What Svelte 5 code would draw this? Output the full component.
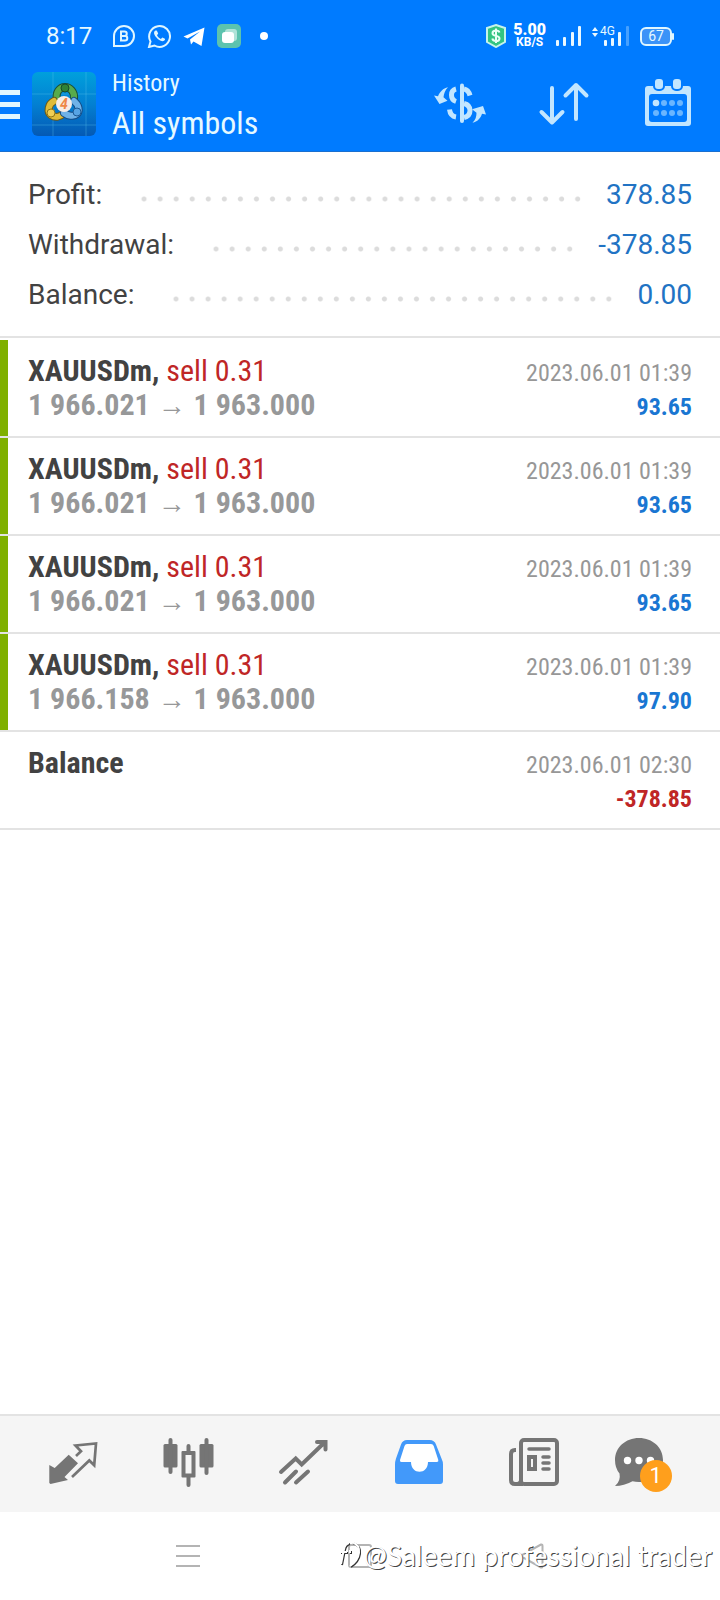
<script lang="ts">
	type Summary = { label: string; value: string };
	type Deal = {
		id: number;
		symbol: string;
		action?: string;
		open?: string;
		close?: string;
		time: string;
		profit: string;
	};

	const summary: Summary[] = [
		{ label: "Profit", value: "378.85" },
		{ label: "Withdrawal", value: "-378.85" },
		{ label: "Balance", value: "0.00" },
	];

	const deals: Deal[] = [
		{ id: 1, symbol: "XAUUSDm", action: "sell 0.31", open: "1 966.021", close: "1 963.000", time: "2023.06.01 01:39", profit: "93.65" },
		{ id: 2, symbol: "XAUUSDm", action: "sell 0.31", open: "1 966.021", close: "1 963.000", time: "2023.06.01 01:39", profit: "93.65" },
		{ id: 3, symbol: "XAUUSDm", action: "sell 0.31", open: "1 966.021", close: "1 963.000", time: "2023.06.01 01:39", profit: "93.65" },
		{ id: 4, symbol: "XAUUSDm", action: "sell 0.31", open: "1 966.158", close: "1 963.000", time: "2023.06.01 01:39", profit: "97.90" },
		{ id: 5, symbol: "Balance", time: "2023.06.01 02:30", profit: "-378.85" },
	];

	let tab = $state("history");
</script>

<div class="app">
	<header>
		<div class="status">
			<div class="status-left">
				<span class="clock">8:17</span>
				<svg width="24" height="24" viewBox="0 0 24 24" fill="none" stroke="#dff6ff" stroke-width="2">
					<path d="M2 22V12a10 10 0 1 1 10 10z" />
					<path d="M9 7.500h3.500a2.200 2.200 0 0 1 0 4.500H9zM9 12h4a2.300 2.300 0 0 1 0 4.600H9z" />
				</svg>
				<svg width="24" height="24" viewBox="0 0 24 24" fill="none" stroke="#dff6ff" stroke-width="2">
					<path d="M2 23l1.500-5.500A10.400 10.400 0 1 1 7.500 21.500z" />
					<path fill="#dff6ff" stroke="none" d="M8.500 6.500c-2 1-2 3.500.5 6.500s5.500 5 8 3.800c1-.6 1.200-1.600.9-2l-2.500-1.400-1.600 1.500c-1.600-.6-3-2-3.800-3.700l1.200-1.600-1.200-2.700c-.4-.6-1-.6-1.500-.4z" />
				</svg>
				<svg width="24" height="24" viewBox="0 0 24 24" fill="#fff">
					<path d="M1.500 12.500L22.500 3.500 19.500 22 11.500 17.500 9 20.500 8 15.500 18 7.500 5.500 14.500z" />
				</svg>
				<svg width="24" height="24" viewBox="0 0 24 24">
					<rect width="24" height="24" rx="5" fill="#5cc3ae" />
					<rect x="8" y="5" width="12" height="12" rx="3" fill="#b0e3d8" />
					<rect x="5" y="8" width="12" height="11" rx="3" fill="#fff" />
				</svg>
				<svg width="24" height="24" viewBox="0 0 24 24"><circle cx="12" cy="12" r="4" fill="#fff" /></svg>
			</div>
			<div class="status-right">
				<svg width="20" height="24" viewBox="0 0 20 24" fill="none">
					<path d="M10 1L19 4v14l-9 5-9-5V4z" fill="#34c482" stroke="#c5f3ea" stroke-width="2" />
					<path d="M13.500 8.500C13 7 11.500 6.500 10 6.500c-2 0-3.500 1-3.500 2.700 0 3.800 7 1.600 7 5.200 0 1.600-1.500 2.600-3.500 2.600s-3.300-.8-3.700-2.500M10 4.500v14.500" stroke="#eafff6" stroke-width="2" />
				</svg>
				<div class="speed"><b>5.00</b><small>KB/S</small></div>
				<svg width="26" height="22" viewBox="0 0 26 22" fill="#eaf8ff">
					<rect x="0" y="15" width="3" height="6" rx="1" />
					<rect x="7" y="12" width="3" height="9" rx="1" />
					<rect x="15" y="7" width="3" height="14" rx="1" />
					<rect x="22" y="1" width="3" height="20" rx="1" />
				</svg>
				<div class="mobile">
					<svg width="38" height="22" viewBox="0 0 38 22" fill="#eaf8ff">
						<path d="M0 6l3-4 3 4zM0 8l3 4 3-4z" />
						<rect x="12" y="15" width="3" height="6" rx="1" />
						<rect x="19" y="13" width="3" height="8" rx="1" />
						<rect x="26" y="7" width="3" height="14" rx="1" />
						<rect x="34" y="1" width="3" height="20" rx="1" opacity=".3" />
					</svg>
					<span>4G</span>
				</div>
				<div class="battery"><span>67</span></div>
			</div>
		</div>

		<div class="bar">
			<button class="menu" aria-label="Menu"><i></i><i></i><i></i></button>
			<svg class="logo" width="64" height="64" viewBox="0 0 64 64">
				<defs>
					<linearGradient id="sky" x1="0" y1="0" x2="0" y2="1">
						<stop offset="0" stop-color="#00a0dc" />
						<stop offset=".5" stop-color="#0380d2" />
						<stop offset="1" stop-color="#0459b4" />
					</linearGradient>
				</defs>
				<rect width="64" height="64" rx="6" fill="url(#sky)" />
				<path d="M0 22h64M0 53h64M21 0v64M54 0v64" stroke="#5cc4ee" stroke-opacity=".35" />
				<g fill="none" stroke-linecap="round">
					<path d="M25 28c-2-8 3-13 8-13s10 5 9 12" stroke="#1c4f36" stroke-width="8" />
					<path d="M25 28c-2-8 3-13 8-13s10 5 9 12" stroke="#57ab4c" stroke-width="6" />
					<path d="M22 29c-6 3-7 11-3 14s9 2 12-1" stroke="#6b5a18" stroke-width="8" />
					<path d="M22 29c-6 3-7 11-3 14s9 2 12-1" stroke="#dfbc3a" stroke-width="6" />
					<path d="M42 29c5 4 6 10 3 13s-9 2-13-1" stroke="#164d86" stroke-width="8" />
					<path d="M42 29c5 4 6 10 3 13s-9 2-13-1" stroke="#6fb2e8" stroke-width="6" />
				</g>
				<circle cx="33" cy="16" r="4" fill="#2f8236" stroke="#174a2c" />
				<circle cx="19" cy="41" r="4" fill="#f0cf55" stroke="#907516" />
				<circle cx="45" cy="40" r="4" fill="#57a4e4" stroke="#1c5994" />
				<circle cx="32" cy="32" r="8" fill="#f6ece6" />
				<text x="32" y="37" text-anchor="middle" fill="#ee8748">4</text>
			</svg>
			<div class="title">
				<span>History</span>
				<h1>All symbols</h1>
			</div>
			<button class="action" aria-label="Deal filter">
				<svg width="56" height="56" viewBox="0 0 56 56" fill="none" stroke="#c2e6ff" stroke-width="5">
					<path d="M30 9.500v35.500" stroke-width="4" stroke-linecap="round" />
					<path d="M24 13c-6 1.500-6 10.500 0 12.500M32 13c3 .5 5 3 6 6.500M32 27.500c8 2 8 12 0 14M17.500 33.500c.5 4 3 7 6.500 7.500" />
					<g fill="#c2e6ff" stroke="none">
						<path d="M2 19.500l4 .7c2-4.500 5-8 10-9-3 3-4 6-4.500 10l4 3.500L7.500 28z" />
						<path d="M54 38.500l-4-.7c-1.500 4.500-4.500 8-9.500 9 3-3 4-6 4-10l-4.500-3.500L51 30z" />
					</g>
				</svg>
			</button>
			<button class="action" aria-label="Sort">
				<svg width="56" height="56" viewBox="0 0 56 56" fill="none" stroke="#c2e6ff" stroke-width="4" stroke-linecap="round" stroke-linejoin="round">
					<path d="M16 12v34M5.500 36L16 46.500 26.500 36M40 43V9M29.500 19.500L40 9l10.500 10.500" />
				</svg>
			</button>
			<button class="action" aria-label="Period">
				<svg width="56" height="56" viewBox="0 0 56 56" fill="#c2e6ff">
					<rect x="5" y="10" width="46" height="40" rx="3" />
					<rect x="9" y="18" width="38" height="28" rx="3" fill="#007bff" />
					<rect x="14" y="2" width="10" height="12" rx="4" stroke="#007bff" stroke-width="2" />
					<rect x="32" y="2" width="10" height="12" rx="4" stroke="#007bff" stroke-width="2" />
					<circle cx="16" cy="27" r="3.300" />
					<g fill="#6ab6ff">
						<circle cx="24" cy="27" r="3" />
						<circle cx="32" cy="27" r="3" />
						<circle cx="40" cy="27" r="3" />
						<circle cx="16" cy="37" r="3" />
						<circle cx="24" cy="37" r="3" />
						<circle cx="32" cy="37" r="3" />
						<circle cx="40" cy="37" r="3" />
					</g>
				</svg>
			</button>
		</div>
	</header>

	<main>
		<dl>
			{#each summary as item (item.label)}
				<div class="total">
					<dt>{item.label}:</dt>
					<dd class="dots" aria-hidden="true"></dd>
					<dd>{item.value}</dd>
				</div>
			{/each}
		</dl>

		<ul>
			{#each deals as deal (deal.id)}
				<li class:trade={deal.action}>
					<div class="line">
						<strong>{deal.symbol}{#if deal.action}, <span class="sell">{deal.action}</span>{/if}</strong>
						<time>{deal.time}</time>
					</div>
					<div class="line">
						<span class="price">
							{#if deal.open}{deal.open} <span class="arrow">→</span> {deal.close}{:else}&nbsp;{/if}
						</span>
						<b class="profit" class:loss={deal.profit.startsWith("-")}>{deal.profit}</b>
					</div>
				</li>
			{/each}
		</ul>
	</main>

	<nav class="tabs">
		<button aria-label="Quotes" onclick={() => (tab = "quotes")}>
			<svg width="56" height="56" viewBox="0 0 56 56">
				<path fill="currentColor" d="M4.300 29l5.400 3L23.700 18.700 33 27.300 19.500 41l3.500 3L5.500 48l-1.200-1z" />
				<path fill="none" stroke="currentColor" stroke-width="2.700" d="M27 41L44.300 24.500l4.900 4.800L51 7.500 30.500 9.500l5.500 5.800L31 20" />
			</svg>
		</button>
		<button aria-label="Charts" onclick={() => (tab = "charts")}>
			<svg width="56" height="56" viewBox="0 0 56 56" fill="currentColor">
				<rect x="3.500" y="8" width="14" height="23.500" rx="1.500" />
				<rect x="8.500" y="2" width="4" height="36" rx="2" />
				<path fill-rule="evenodd" d="M22.500 15h12q1 0 1 1v24.500q0 1-1 1h-12q-1 0-1-1V16q0-1 1-1zm3 4v18.500h6V19z" />
				<path d="M26.500 16v-6a2 2 0 0 1 4 0v6zM26.500 41v8a2 2 0 0 0 4 0v-8z" />
				<rect x="39.500" y="8" width="14" height="23.500" rx="1.500" />
				<rect x="44.500" y="2" width="4" height="37" rx="2" />
			</svg>
		</button>
		<button aria-label="Trade" onclick={() => (tab = "trade")}>
			<svg width="56" height="56" viewBox="0 0 56 56" fill="none" stroke="currentColor" stroke-width="4" stroke-linecap="round">
				<path d="M6 36l14.700-13.500 6 6L50 6M42 6h8.500v7.500M10 46.500L21 35.500M21 46.500L33 35.500" />
			</svg>
		</button>
		<button class:active={tab === "history"} aria-label="History" onclick={() => (tab = "history")}>
			<svg width="56" height="56" viewBox="0 0 56 56">
				<path fill="currentColor" d="M18 4h22.500q5 0 6.500 4.500l5.500 14q1.500 3 1.500 6V45q0 3-3 3H9q-3 0-3-3V28.500q0-3 1-6l5-14Q13.500 4 18 4z" />
				<path fill="#fff" d="M18 8h24q2 0 2.700 2l4.600 14q.5 2-1.500 2H39c0 13-17 13-17 0h-9.500q-2 0-1.500-2l4.500-14q.7-2 2.500-2z" />
			</svg>
		</button>
		<button aria-label="News" onclick={() => (tab = "news")}>
			<svg width="56" height="56" viewBox="0 0 56 56" fill="none" stroke="currentColor" stroke-width="4" stroke-linecap="round">
				<rect x="17" y="4" width="36" height="44" rx="3" />
				<path stroke-linecap="butt" d="M12 14h-1q-4 0-4 4v26q0 4 4 4h8M17 44q0 4-5 4" />
				<path stroke-width="3.500" d="M25 13h20M39 21h6M39 27h6M39 33h6" />
				<rect x="25" y="21" width="6" height="12" />
			</svg>
		</button>
		<button aria-label="Messages" onclick={() => (tab = "messages")}>
			<span class="chat">
				<svg width="64" height="56" viewBox="0 0 64 56">
					<path fill="currentColor" d="M24 2c13.500 0 24 9.500 24 22S37.500 46 24 46q-3.500 0-6.500-.8Q9 50 0 50q6-5 4.500-12.500Q0 32 0 24C0 11.500 10.500 2 24 2z" />
					<g fill="#fff">
						<circle cx="12.500" cy="24.500" r="3.700" />
						<circle cx="24" cy="24.500" r="3.700" />
						<circle cx="35.500" cy="24.500" r="3.700" />
					</g>
				</svg>
				<span class="badge">1</span>
			</span>
		</button>
	</nav>

	<footer>
		<button aria-label="Recent apps">
			<svg width="24" height="24" viewBox="0 0 24 24" stroke="#b4b4b4" stroke-width="2"><path d="M0 2h24M0 12h24M0 22h24" /></svg>
		</button>
		<button aria-label="Home">
			<svg width="24" height="24" viewBox="0 0 24 24" fill="none" stroke="#b4b4b4" stroke-width="2"><rect x="1" y="1" width="22" height="22" rx="2" /></svg>
		</button>
		<button aria-label="Back">
			<svg width="24" height="26" viewBox="0 0 24 26" fill="none" stroke="#b4b4b4" stroke-width="2"><path d="M21 1.500q1.500-.5 1.500 1.500v20q0 2-1.500 1.500L2 14q-1-1 0-2z" /></svg>
		</button>
		<div class="signature">
			<svg width="26" height="30" viewBox="0 0 26 30" fill="none">
				<path d="M4 25l3-15q1-5 5-6M3 13h7M13 11v3M15 3q8 3 7 11T13 27" stroke="#333" stroke-width="2" />
				<path d="M3 24l3-15q1-5 5-6M2 12h7M12 10v3M14 2q8 3 7 11T12 26" stroke="#fff" stroke-width="2" />
			</svg>
			<span>@Saleem professional trader</span>
		</div>
	</footer>
</div>

<style>
	:global(body) {
		margin: 0;
		background-color: #fff;
	}
	.app {
		display: flex;
		flex-direction: column;
		min-height: 100vh;
		font-family: "Roboto Condensed", "Liberation Sans Narrow", Roboto, sans-serif;
		color: #424242;
	}
	button {
		display: flex;
		align-items: center;
		justify-content: center;
		border: 0;
		padding: 0;
		background-color: inherit;
		color: inherit;
		font: inherit;
	}
	svg {
		display: block;
		flex-shrink: 0;
	}
	header {
		background-color: #007bff;
		color: #e6f9ff;
		box-shadow: inset 0 -1px 0 #1a6fd0;
	}
	.status {
		display: flex;
		justify-content: space-between;
		height: 40px;
		padding: 16px 48px 0 46px;
		font-family: Roboto, sans-serif;
	}
	.status-left,
	.status-right {
		display: flex;
		align-items: center;
		gap: 11px;
	}
	.status-right {
		gap: 10px;
	}
	.clock {
		margin-right: 9px;
		font-size: 24px;
	}
	.speed {
		display: flex;
		flex-direction: column;
		align-items: center;
		margin-left: -3px;
		color: #fff;
		font-weight: 700;
		line-height: 12px;
	}
	.speed b {
		font-size: 16px;
	}
	.speed small {
		font-size: 12px;
	}
	.mobile {
		position: relative;
	}
	.mobile span {
		position: absolute;
		top: 0;
		left: 8px;
		font-size: 12px;
		line-height: 12px;
	}
	.battery {
		position: relative;
		width: 28px;
		border: 2px solid #dff6ff;
		border-radius: 6px;
		background-color: #3a93f8;
		font-size: 14px;
		line-height: 15px;
		text-align: center;
	}
	.battery::after {
		content: "";
		position: absolute;
		top: 4px;
		right: -4px;
		width: 2px;
		height: 7px;
		border-radius: 1px;
		background-color: #dff6ff;
	}
	.bar {
		display: flex;
		align-items: center;
		height: 96px;
	}
	.menu {
		flex-direction: column;
		gap: 7px;
		width: 20px;
		margin-right: 12px;
	}
	.menu i {
		width: 20px;
		height: 5px;
		background-color: #dff6ff;
	}
	.logo text {
		font: italic 700 14px Roboto, sans-serif;
	}
	.title {
		flex: 1;
		padding: 6px 0 0 16px;
	}
	.title span {
		display: block;
		font-size: 24px;
		line-height: 32px;
	}
	h1 {
		margin: 0;
		font-size: 32px;
		font-weight: 400;
		line-height: 48px;
		white-space: nowrap;
	}
	.action {
		width: 104px;
		height: 96px;
	}
	main {
		flex: 1;
	}
	dl {
		margin: 0;
		padding: 18px 28px 16px;
		border-bottom: 2px solid #e3e3e3;
		font-family: Roboto, sans-serif;
		font-size: 28px;
	}
	.total {
		display: flex;
		height: 50px;
		line-height: 50px;
	}
	dd {
		margin: 0;
		color: #2173c4;
	}
	.dots {
		flex: 1;
		margin: 8px 20px 0 34px;
		background: radial-gradient(circle, #dcdcdc 2px, transparent 3px) center / 16px 40px space no-repeat;
	}
	ul {
		margin: 0;
		padding: 2px 0 0;
	}
	li {
		position: relative;
		list-style: none;
		padding: 14px 28px;
		border-bottom: 2px solid #e3e3e3;
	}
	li.trade::before {
		content: "";
		position: absolute;
		top: 0;
		bottom: 0;
		left: 0;
		width: 8px;
		background-color: #7fb000;
	}
	.line {
		display: flex;
		align-items: baseline;
		justify-content: space-between;
		height: 34px;
		font-size: 30px;
		line-height: 34px;
	}
	.sell {
		color: #bf2626;
		font-weight: 400;
	}
	.price {
		color: #979899;
		font-weight: 700;
	}
	.arrow {
		margin: 0 1px;
		font-family: "Liberation Sans", sans-serif;
		font-size: 28px;
		line-height: 1;
	}
	time {
		color: #979797;
		font-size: 24px;
	}
	.profit {
		color: #1976d2;
		font-size: 24px;
	}
	.profit.loss {
		color: #bf2626;
	}
	.tabs {
		display: flex;
		padding: 0 16px;
		border-top: 2px solid #e3e3e3;
		background-color: #f5f5f5;
		color: #757575;
	}
	.tabs button {
		flex: 1;
		height: 96px;
	}
	.tabs button.active {
		color: #4299fa;
	}
	.chat {
		position: relative;
	}
	.badge {
		position: absolute;
		top: 24px;
		left: 25px;
		width: 32px;
		border-radius: 16px;
		background-color: #ff9f1c;
		color: #fff;
		font-family: Roboto, sans-serif;
		font-size: 22px;
		line-height: 32px;
	}
	footer {
		position: relative;
		display: flex;
		height: 88px;
		padding: 0 102px;
	}
	footer button {
		flex: 1;
	}
	.signature {
		position: absolute;
		right: 8px;
		bottom: 28px;
		display: flex;
		align-items: center;
		color: #fff;
		font-family: Lato, sans-serif;
		font-size: 28px;
		line-height: 34px;
		text-shadow: 1px 1px 0 #444;
		white-space: nowrap;
	}
</style>
